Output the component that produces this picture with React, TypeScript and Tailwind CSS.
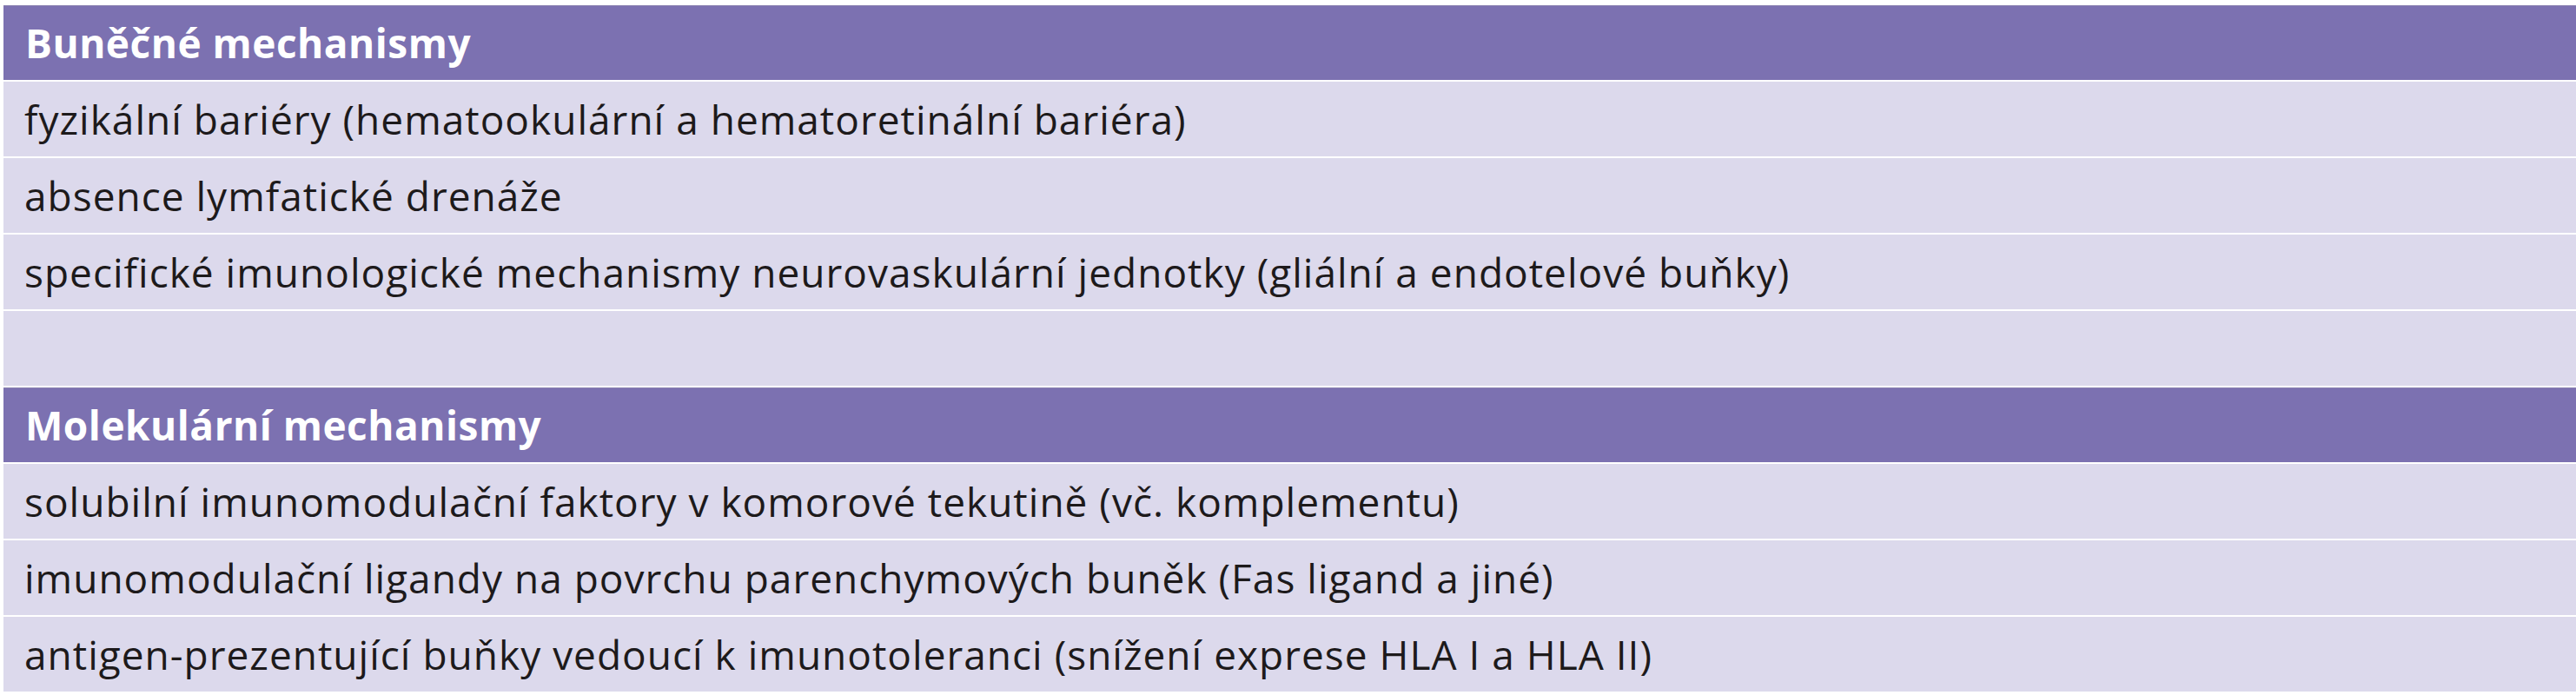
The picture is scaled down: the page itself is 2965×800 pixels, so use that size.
const sections = [
  {
    title: "Buněčné mechanismy",
    rows: [
      "fyzikální bariéry (hematookulární a hematoretinální bariéra)",
      "absence lymfatické drenáže",
      "specifické imunologické mechanismy neurovaskulární jednotky (gliální a endotelové buňky)",
      "",
    ],
  },
  {
    title: "Molekulární mechanismy",
    rows: [
      "solubilní imunomodulační faktory v komorové tekutině (vč. komplementu)",
      "imunomodulační ligandy na povrchu parenchymových buněk (Fas ligand a jiné)",
      "antigen-prezentující buňky vedoucí k imunotoleranci (snížení exprese HLA I a HLA II)",
    ],
  },
];

export default function App() {
  return (
    <div className="min-h-screen w-full bg-white pl-[4px] pt-[6px] font-['Open_Sans',sans-serif]">
      <div className="flex w-full flex-col gap-[2px]">
        {sections.map((section) => (
          <div key={section.title} className="flex flex-col gap-[2px]">
            <div className="flex h-[86px] items-center border-t border-[#8a82b0] bg-[#7c71b1] pl-[25px] text-[46px] font-bold tracking-[0.5px] text-white">
              {section.title}
            </div>
            {section.rows.map((row, i) => (
              <div
                key={i}
                className="flex h-[86px] items-center bg-[#dcd9ec] pl-[24px] text-[46px] tracking-[1px] text-[#1d1a1b]"
              >
                {row}
              </div>
            ))}
          </div>
        ))}
      </div>
    </div>
  );
}
